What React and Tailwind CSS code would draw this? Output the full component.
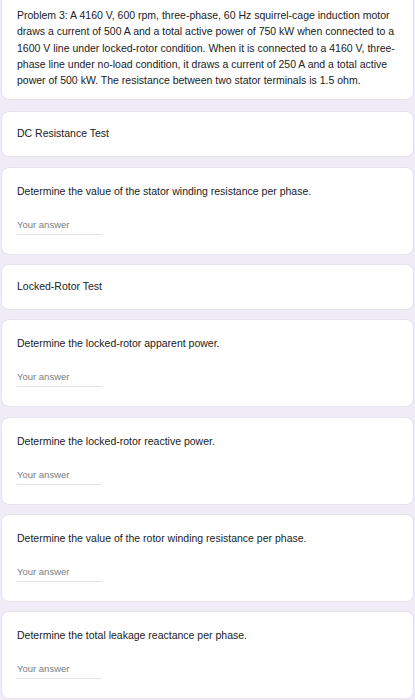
export default function App() {
  const font = { fontFamily: '"Liberation Sans", Arial, Helvetica, sans-serif' };
  const Section = ({ title }) => (
    <div className="bg-white rounded-lg border border-[#e6e3ec] h-[46px] flex items-center pl-[15px] text-[10.5px] text-[#202124]">
      {title}
    </div>
  );
  const Question = ({ q }) => (
    <div className="bg-white rounded-lg border border-[#e6e3ec] h-[88px] pl-[15px] pt-[15px] text-[#202124]">
      <div className="text-[10.5px] leading-[16px]">{q}</div>
      <div className="mt-[20px] w-[85px] border-b border-[#e3e3e3] pb-[3px] text-[9.5px] leading-[12px] text-[#7a7d82]">
        Your answer
      </div>
    </div>
  );
  return (
    <div className="w-[415px] h-[700px] overflow-hidden bg-[#efebf7] px-[1px]" style={font}>
      <div className="flex flex-col gap-[9.4px]">
        <div className="bg-white rounded-b-lg border border-t-0 border-[#e6e3ec] pt-[7px] pb-[11px] pl-[15px] pr-[12px] text-[10.5px] leading-[16.25px] text-[#202124] mb-[1.5px]">
          Problem 3: A 4160 V, 600 rpm, three-phase, 60 Hz squirrel-cage induction motor draws a current of 500 A and a total active power of 750 kW when connected to a 1600 V line under locked-rotor condition. When it is connected to a 4160 V, three-phase line under no-load condition, it draws a current of 250 A and a total active power of 500 kW. The resistance between two stator terminals is 1.5 ohm.
        </div>
        <Section title="DC Resistance Test" />
        <Question q="Determine the value of the stator winding resistance per phase." />
        <Section title="Locked-Rotor Test" />
        <Question q="Determine the locked-rotor apparent power." />
        <Question q="Determine the locked-rotor reactive power." />
        <Question q="Determine the value of the rotor winding resistance per phase." />
        <Question q="Determine the total leakage reactance per phase." />
      </div>
    </div>
  );
}
